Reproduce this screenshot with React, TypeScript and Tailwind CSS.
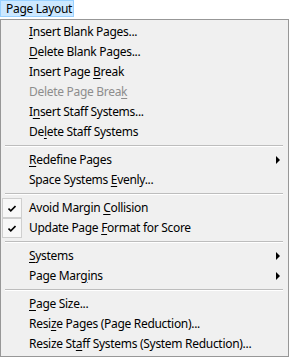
import React from 'react'

type Item =
  | { kind: 'sep' }
  | { kind: 'item'; label: string; disabled?: boolean; checked?: boolean; sub?: boolean }

const items: Item[] = [
  { kind: 'item', label: '&Insert Blank Pages...' },
  { kind: 'item', label: '&Delete Blank Pages...' },
  { kind: 'item', label: 'Insert Page &Break' },
  { kind: 'item', label: 'Delete Page Brea&k', disabled: true },
  { kind: 'item', label: 'I&nsert Staff Systems...' },
  { kind: 'item', label: 'De&lete Staff Systems' },
  { kind: 'sep' },
  { kind: 'item', label: '&Redefine Pages', sub: true },
  { kind: 'item', label: 'Space Systems &Evenly...' },
  { kind: 'sep' },
  { kind: 'item', label: 'Avoid Margin &Collision', checked: true },
  { kind: 'item', label: 'Update Page &Format for Score', checked: true },
  { kind: 'sep' },
  { kind: 'item', label: '&Systems', sub: true },
  { kind: 'item', label: 'Page Mar&gins', sub: true },
  { kind: 'sep' },
  { kind: 'item', label: '&Page Size...' },
  { kind: 'item', label: 'Resi&ze Pages (Page Reduction)...' },
  { kind: 'item', label: 'Resize St&aff Systems (System Reduction)...' },
]

// "&" marks the access key letter
function Label({ text }: { text: string }) {
  const i = text.indexOf('&')
  if (i < 0) return <>{text}</>
  return (
    <>
      {text.slice(0, i)}
      <span className="underline underline-offset-[2px]">{text[i + 1]}</span>
      {text.slice(i + 2)}
    </>
  )
}

function Check() {
  return (
    <div className="absolute left-[-1px] top-0 w-[20px] h-[20px] border border-[#cfcfcf] bg-[#f8f8f8] flex items-center justify-center">
      <svg width="8" height="7" viewBox="0 0 8 7">
        <path d="M0.5 3.5 L2.8 5.8 L7.5 1" stroke="#000" strokeWidth="1.6" fill="none" />
      </svg>
    </div>
  )
}

export default function App() {
  return (
    <div
      className="w-[290px] h-[357px] bg-white tracking-[-0.3px]"
      style={{ fontFamily: '"Noto Sans", sans-serif' }}
    >
      {/* menu bar title */}
      <div className="w-[74px] h-[17px] bg-[#cce8ff] border border-[#99d1ff] flex items-center pl-[5px] text-[12px] text-black leading-none whitespace-nowrap">
        Page Layout
      </div>

      {/* dropdown */}
      <div className="mt-[2px] w-[289px] border border-[#979797] bg-[#f0f0f0] p-[2px]">
        {items.map((it, idx) =>
          it.kind === 'sep' ? (
            <div key={idx} className="h-[8px] flex items-center pl-[2px] pr-[3px]">
              <div className="w-full border-t border-[#bdbdbd] border-b border-b-white" />
            </div>
          ) : (
            <div
              key={idx}
              className={`relative h-[20px] flex items-center pl-[26px] text-[12px] leading-none whitespace-nowrap ${
                it.disabled ? 'text-[#8d8d8d]' : 'text-black'
              }`}
            >
              {it.checked && <Check />}
              <span>
                <Label text={it.label} />
              </span>
              {it.sub && (
                <svg className="absolute right-[6px] top-[6px]" width="4" height="8" viewBox="0 0 4 8">
                  <path d="M0 0 L4 4 L0 8 Z" fill="#000" />
                </svg>
              )}
            </div>
          )
        )}
      </div>
    </div>
  )
}
